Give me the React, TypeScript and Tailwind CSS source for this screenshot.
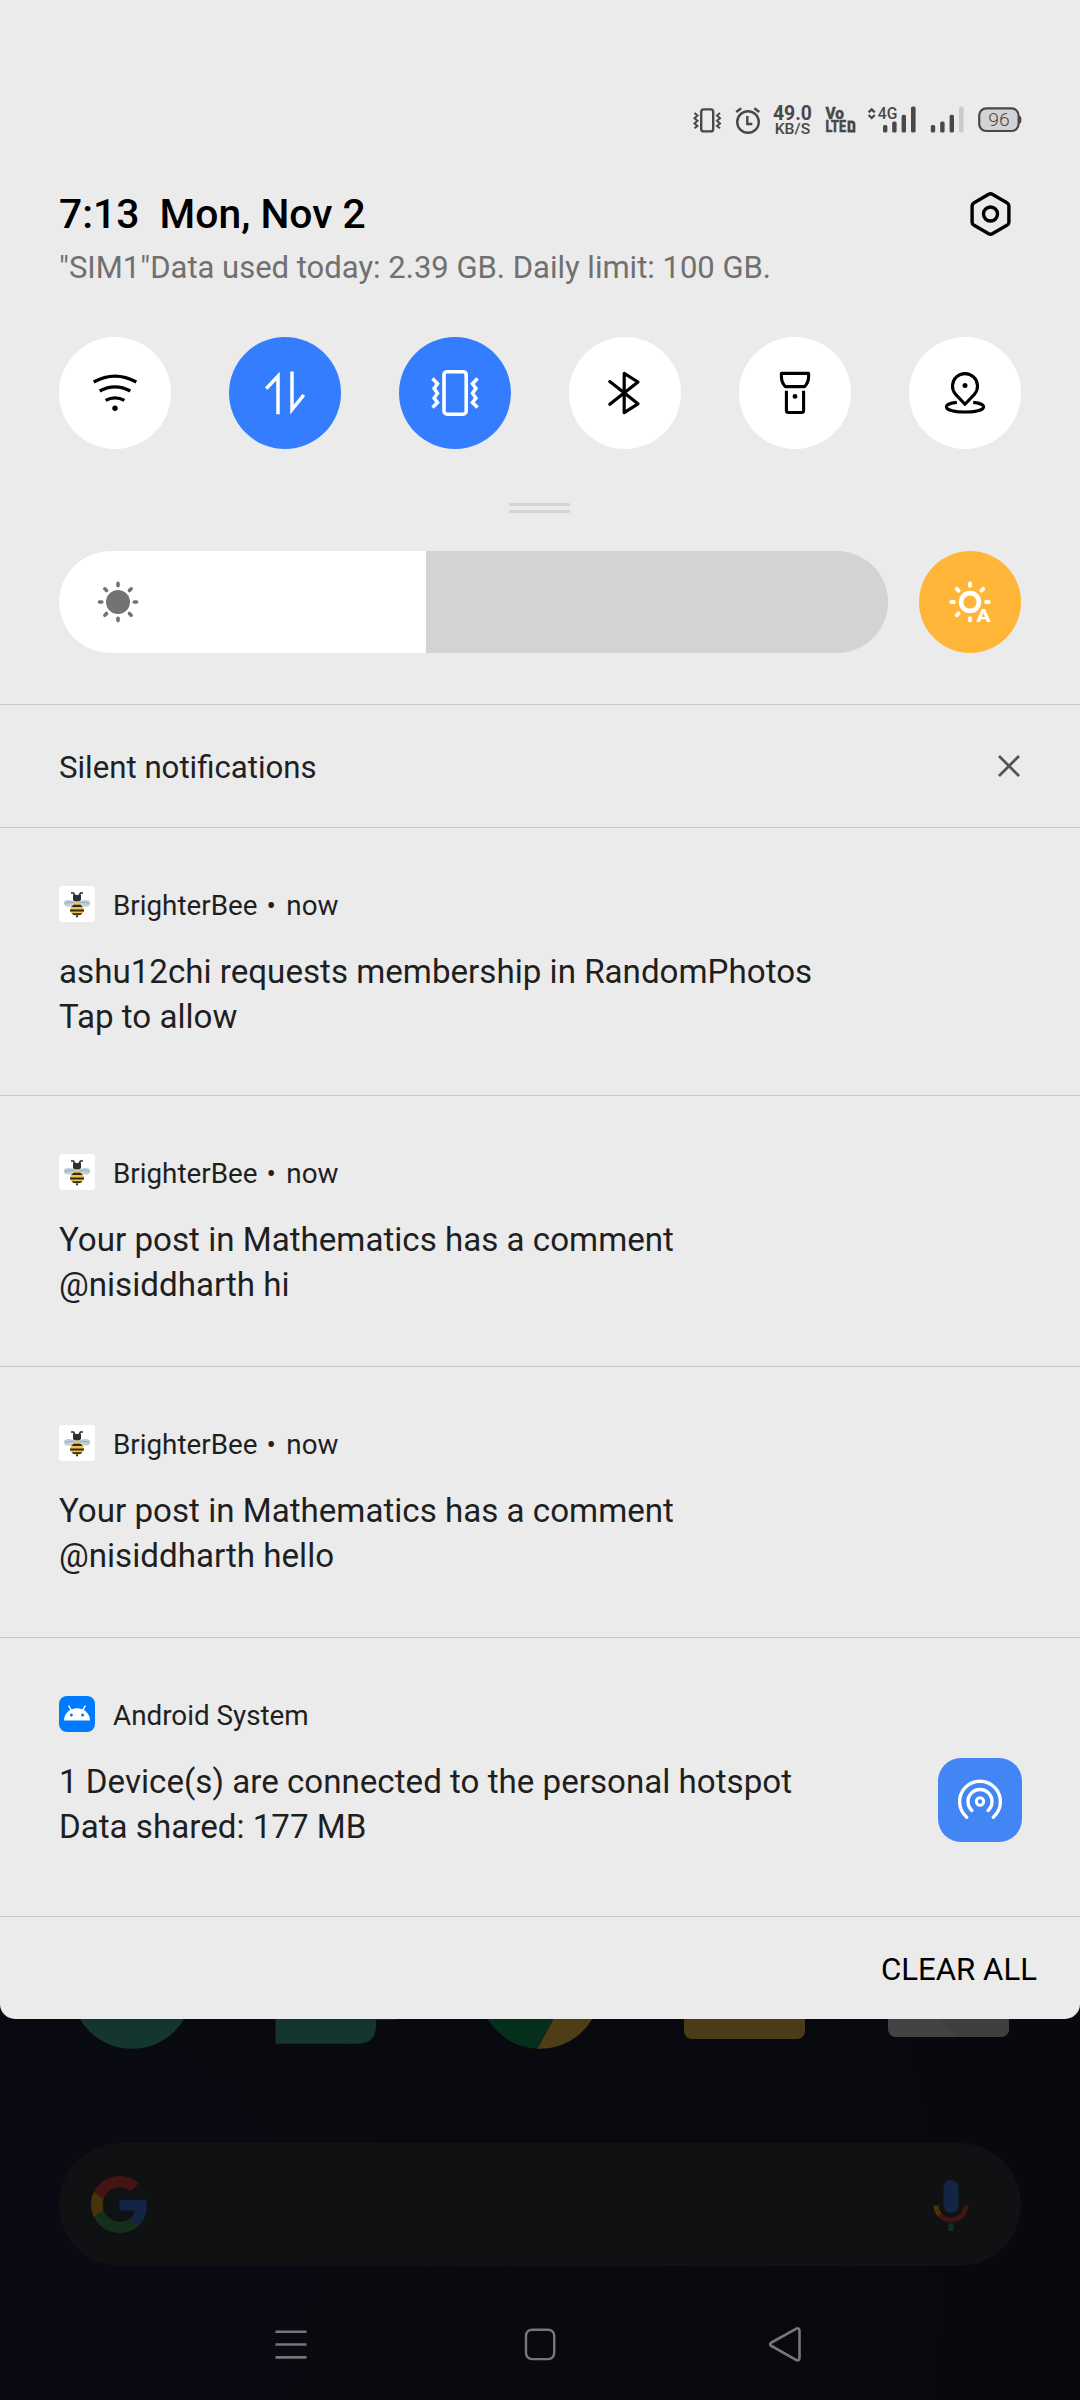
import type { ReactNode } from "react";

function StatusIcons() {
  return (
    <svg className="block h-[46px] w-[340px]" viewBox="690 97 340 46" fill="none" stroke="#484848" fontFamily="Roboto, sans-serif">
      <rect x="701.2" y="109.4" width="12" height="22" rx="2.5" strokeWidth="2.4" />
      <path d="M694.5 113l3 2.6-3 2.6 3 2.6-3 2.6 3 2.6-3 2.2M720 113l-3 2.6 3 2.6-3 2.6 3 2.6-3 2.6 3 2.2" strokeWidth="2" />
      <circle cx="748" cy="122" r="10.8" strokeWidth="2.4" />
      <path d="M747.3 116v8h5M736.2 112l5-3.8M759.3 112l-5-3.8" strokeWidth="2.4" />
      <g fill="#484848" stroke="none">
        <text x="773" y="120" fontSize="19.5" fontWeight="700" textLength="39" lengthAdjust="spacingAndGlyphs">49.0</text>
        <text x="774.7" y="133.8" fontSize="15" fontWeight="500" textLength="35.5" lengthAdjust="spacingAndGlyphs">KB/S</text>
        <text x="825.5" y="118.9" fontSize="16.5" fontWeight="800" stroke="#484848" strokeWidth=".4" textLength="18.5" lengthAdjust="spacingAndGlyphs">Vo</text>
        <text x="825.5" y="132.4" fontSize="16.8" fontWeight="800" stroke="#484848" strokeWidth=".5" textLength="20.5" lengthAdjust="spacingAndGlyphs">LTE</text>
        <text x="877.8" y="118.8" fontSize="17" fontWeight="500" textLength="19.5" lengthAdjust="spacingAndGlyphs">4G</text>
        <rect x="883" y="125" width="4.4" height="7.5" rx="1.6" />
        <rect x="892.2" y="121.6" width="4.4" height="10.9" rx="1.6" />
        <rect x="901.6" y="114.8" width="4.4" height="17.7" rx="1.6" />
        <rect x="911" y="106.5" width="4.6" height="26" rx="1.6" />
        <rect x="930.8" y="125" width="4.4" height="7.5" rx="1.6" />
        <rect x="940.2" y="121.6" width="4.4" height="10.9" rx="1.6" />
        <rect x="949.6" y="114.8" width="4.4" height="17.7" rx="1.6" />
        <rect x="959" y="106.5" width="4.6" height="26" rx="1.6" fill="#cbcbcb" />
        <path d="M1018 116h1.5a1.8 1.8 0 0 1 1.8 1.8v4a1.8 1.8 0 0 1-1.8 1.8H1018z" />
      </g>
      <path d="M849 121.8h2.6q2.4 0 2.4 2.4v6.9H849z" strokeWidth="2.8" />
      <path d="M868.6 112.4l3.1-3 3.1 3M868.6 115l3.1 3 3.1-3" strokeWidth="2.2" />
      <rect x="979.2" y="108.4" width="39.4" height="22.6" rx="7" fill="#d3d3d3" strokeWidth="2.2" />
      <text x="988.3" y="126.2" fontSize="19" fontWeight="300" fill="#484848" stroke="none" textLength="21.5" lengthAdjust="spacingAndGlyphs">96</text>
    </svg>
  );
}

function SettingsIcon() {
  return (
    <svg className="size-[46px]" viewBox="0 0 46 46" fill="none" stroke="#000" strokeWidth="3.4" strokeLinejoin="round">
      <path d="M21.7 3.3q1.8-1 3.6 0l14.6 8.4q2 1.1 2 3.1v16.4q0 2-2 3.1l-14.6 8.4q-1.8 1-3.6 0l-14.6-8.4q-2-1.100-2-3.100V14.800q0-2 2-3.100z" />
      <circle cx="23.5" cy="23" r="7" />
    </svg>
  );
}

/* Quick-setting glyphs share a 56-unit canvas centred in the round tile. */
function TileIcon({ children }: { children: ReactNode }) {
  return (
    <svg className="size-14" viewBox="-28 -28 56 56" fill="none" stroke="currentColor" strokeWidth="3">
      {children}
    </svg>
  );
}

const tiles: { name: string; on: boolean; icon: ReactNode }[] = [
  {
    name: "Wi-Fi",
    on: false,
    icon: (
      <>
        <path d="M-21.3-11Q0-22.6 21.3-11M-15.3-2Q0-10.2 15.3-2M-9.4 7.4Q0 2.2 9.4 7.4" strokeWidth="3.3" />
        <circle cy="15.3" r="2.7" fill="currentColor" stroke="none" />
      </>
    ),
  },
  {
    name: "Mobile data",
    on: true,
    icon: <path d="M-18.8-4.4L-7-16.8V21.3M7-21.5V16.6L18.8 2" strokeWidth="3.5" />,
  },
  {
    name: "Vibrate",
    on: true,
    icon: (
      <>
        <rect x="-11" y="-21.3" width="22.2" height="42.5" rx="3.2" strokeWidth="3.6" />
        <path d="M-22.5-14.5l5 5.2-3.4 4.8 3.4 4.8-3.4 4.8 3.4 4.4-5 5M22.5-14.5l-5 5.2 3.4 4.8-3.4 4.8 3.4 4.8-3.4 4.4 5 5" strokeWidth="3.5" />
      </>
    ),
  },
  {
    name: "Bluetooth",
    on: false,
    icon: <path d="M-15.2-11.4L13 10.8-.8 19.6v-39.2L13-11-15.2 11.2" strokeWidth="3.2" strokeLinecap="round" strokeLinejoin="round" />,
  },
  {
    name: "Flashlight",
    on: false,
    icon: (
      <>
        <path d="M-13.6-19.6h27.2v3q0 6-4 10.2H-9.6q-4-4.2-4-10.2zM-8.6-2.2V17.5q0 2 2 2H6.6q2 0 2-2V-2.2" strokeWidth="3.1" strokeLinejoin="round" />
        <circle cy="3.4" r="2.4" fill="currentColor" stroke="none" />
      </>
    ),
  },
  {
    name: "Location",
    on: false,
    icon: (
      <>
        <path d="M0 11.3L-9.6 1.1A12.5 12.5 0 1 1 9.6 1.1Z" strokeWidth="3.1" strokeLinejoin="round" />
        <circle cy="-7.6" r="2.5" fill="currentColor" stroke="none" />
        <path d="M-8.2 9.4C-14 10-18.6 11.6-18.6 13.8c0 7 37.2 7 37.2 0 0-2.2-4.6-3.8-10.4-4.4" strokeWidth="3.1" />
      </>
    ),
  },
];

const rayAngles = [0, 45, 90, 135, 180, 225, 270, 315];

function SunIcon() {
  return (
    <svg className="size-[42px]" viewBox="-21 -21 42 42" stroke="#737373" strokeWidth="3.6" strokeLinecap="round">
      <circle r="12" fill="#737373" stroke="none" />
      {rayAngles.map((a) => (
        <path key={a} d="M0-18.6V-16.2" transform={`rotate(${a})`} />
      ))}
    </svg>
  );
}

function AutoSunIcon() {
  return (
    <svg className="size-[52px]" viewBox="-26 -26 52 52" stroke="#fff" strokeWidth="4" strokeLinecap="round" fill="none">
      <circle r="8.9" strokeWidth="4.6" />
      {rayAngles
        .filter((a) => a !== 135)
        .map((a) => (
          <path key={a} d="M0-18.6V-16.2" transform={`rotate(${a})`} />
        ))}
      <text x="6.2" y="20.4" fontSize="18.5" fontWeight="800" fontFamily="Roboto, sans-serif" fill="#fff" stroke="none" textLength="14.5" lengthAdjust="spacingAndGlyphs">
        A
      </text>
    </svg>
  );
}

function BeeIcon() {
  return (
    <span className="flex size-9 rounded-[3px] bg-white">
      <svg className="size-9" viewBox="0 0 36 36">
        <path d="M16.5 10.5l-2-3.500h-2.500M19.500 10.500l2-3.500H24" fill="none" stroke="#2b3137" strokeWidth="1.600" />
        <path d="M14 9h8v4.500l-1 2h-6l-1-2z" fill="#2b3137" />
        <path d="M17 16c-3-2.400-9-2.800-12-.6-.8 4.600 3 6 6.500 4.800C14 19.400 16 18 17 16zM19 16c3-2.400 9-2.800 12-.6.8 4.600-3 6-6.500 4.800C22 19.400 20 18 19 16z" fill="#c0ced5" />
        <path d="M6 17.600c3-1.500 7-1.600 10-.6M30 17.600c-3-1.500-7-1.600-10-.6" stroke="#93a6af" strokeWidth=".9" fill="none" />
        <path d="M18 15.500l5 4.500q3 2.500 1 6.500-2 3-6 3.500-4-.5-6-3.500-2-4 1-6.500z" fill="#efc04d" />
        <path d="M14.500 18.700h7l2.400 2.400H12.100zM11 23.500h14v2H11zM12.500 27.200h11l-2 1.900h-7zM17 29.500h2v1.700h-2z" fill="#33291a" />
      </svg>
    </span>
  );
}

function AndroidIcon() {
  return (
    <span className="flex size-9 rounded-[8px] bg-[#007bff]">
      <svg className="size-9" viewBox="0 0 36 36">
        <path d="M5 24.500a13 12.300 0 0 1 26 0z" fill="#fff" />
        <path d="M12.600 14.800L9.600 9.600M23.400 14.800l3-5.200" stroke="#fff" strokeWidth="1.500" />
        <circle cx="12.400" cy="19" r="1.500" fill="#007bff" />
        <circle cx="23.600" cy="19" r="1.500" fill="#007bff" />
      </svg>
    </span>
  );
}

function HotspotIcon() {
  return (
    <span className="-mt-px flex size-[84px] rounded-[23px] bg-[#4285f4]">
      <svg className="size-[84px]" viewBox="0 0 84 84" fill="none" stroke="#fff" strokeWidth="3.400" strokeLinecap="round">
        <circle cx="42" cy="43.500" r="3.700" strokeWidth="3" />
        <path d="M33.900 52.400a12 12 0 1 1 16.200 0" />
        <path d="M28.800 59.200a20.400 20.400 0 1 1 26.400 0" />
      </svg>
    </span>
  );
}

type NotificationProps = { app: string; time?: string; icon: ReactNode; title: string; text: string; action?: ReactNode; size: string };

function Notification({ app, time, icon, title, text, action, size }: NotificationProps) {
  return (
    <article className={`flex flex-col border-b border-[#c5c7c7] pt-[58px] pr-[58px] pl-[59px] text-[#1f1f1f] ${size}`}>
      <header className="flex h-9 items-center gap-[18px]">
        {icon}
        <div className="flex gap-[9px] pt-[3px] text-[27.8px] leading-9">
          <span>{app}</span>
          {time && <span>•</span>}
          {time && <span className="ml-[1.5px]">{time}</span>}
        </div>
      </header>
      <div className="mt-[27px] flex justify-between">
        <div className="text-[33.15px] leading-[45px] whitespace-nowrap">
          <h2>{title}</h2>
          <p>{text}</p>
        </div>
        {action}
      </div>
    </article>
  );
}

function GoogleLogo() {
  return (
    <svg className="h-[57px] w-[57px]" viewBox="0 0 48 48">
      <path fill="#431412" d="M24 9.5c3.54 0 6.71 1.22 9.21 3.6l6.85-6.85C35.9 2.38 30.47 0 24 0 14.62 0 6.51 5.38 2.56 13.22l7.98 6.19C12.43 13.72 17.74 9.5 24 9.5z" />
      <path fill="#132444" d="M46.98 24.55c0-1.57-.15-3.09-.38-4.55H24v9.02h12.94c-.58 2.96-2.26 5.48-4.78 7.18l7.73 6c4.51-4.18 7.09-10.36 7.09-17.65z" />
      <path fill="#463509" d="M10.53 28.59c-.48-1.45-.76-2.99-.76-4.59s.27-3.14.76-4.59l-7.98-6.19C.92 16.46 0 20.12 0 24c0 3.88.92 7.54 2.56 10.78l7.97-6.19z" />
      <path fill="#162f1a" d="M24 48c6.48 0 11.93-2.13 15.89-5.81l-7.73-6c-2.15 1.45-4.92 2.3-8.16 2.3-6.26 0-11.57-4.22-13.47-9.91l-7.98 6.19C6.51 42.62 14.62 48 24 48z" />
    </svg>
  );
}

function MicIcon() {
  return (
    <svg className="h-[54px] w-[38px]" viewBox="0 0 38 54" fill="none" strokeWidth="5">
      <rect x="11.5" y="2" width="15" height="33" rx="7.5" fill="#132444" />
      <path d="M4 27.5a15 15 0 0 0 4 9.8" stroke="#463509" />
      <path d="M8 37.3A15 15 0 0 0 34 27.5" stroke="#431412" />
      <path d="M19 45.3v7.7" stroke="#15301c" />
    </svg>
  );
}

function DockIcons() {
  return (
    <div className="flex h-[30px] w-full items-start pl-[72px]">
      <svg className="h-[30px] w-[120px]" viewBox="0 0 120 30">
        <circle cx="60" cy="-30.5" r="60.3" fill="#15362f" />
      </svg>
      <svg className="ml-[83px] h-[30px] w-[123px]" viewBox="0 0 123 30">
        <path d="M.5 0h100.500v7q0 17.700-19 17.700H.5z" fill="#15362f" />
        <path d="M101 0h21v1h-21z" fill="#122c28" />
      </svg>
      <svg className="ml-[82px] h-[30px] w-[120px]" viewBox="0 0 120 30">
        <path d="M7.700 0a60.300 60.300 0 0 0 49.800 29.700L73.500 0z" fill="#052f1a" />
        <path d="M73.500 0L57.500 29.700A60.300 60.300 0 0 0 112.300 0z" fill="#4e3e17" />
      </svg>
      <div className="ml-[83.5px] h-5 w-[121px] rounded-b-[8px] bg-[#4a3c17]" />
      <div className="ml-[83px] h-[18px] w-[121px] overflow-hidden rounded-b-[8px] bg-[#434343]">
        <svg className="h-[18px] w-[121px]" viewBox="0 0 121 18">
          <path d="M51 0l18 18h52V0z" fill="#3f3f3f" />
        </svg>
      </div>
    </div>
  );
}

export default function App() {
  return (
    <main className="flex h-[2400px] w-[1080px] flex-col overflow-hidden bg-[#08090e] bg-[radial-gradient(circle_at_4%_95%,#0a0a14_0,#090a0f_420px,#08090e_900px)] font-['Roboto',sans-serif]">
      <section className="flex h-[2019px] shrink-0 flex-col rounded-b-[15px] bg-[#ebebeb]">
        <div className="flex justify-end pt-[97px] pr-[50px]">
          <StatusIcons />
        </div>

        <header className="mt-[47px] flex justify-between pr-[67px] pl-[59px]">
          <div>
            <h1 className="text-[40.8px] leading-[48px] font-medium whitespace-pre text-black">7:13  Mon, Nov 2</h1>
            <p className="mt-[12px] text-[31px] leading-9 whitespace-nowrap text-[#707070]">
              "SIM1"Data used today: 2.39 GB. Daily limit: 100 GB.
            </p>
          </div>
          <div className="pt-px">
            <SettingsIcon />
          </div>
        </header>

        <div className="mt-[51px] flex gap-[58px] pl-[59px]">
          {tiles.map((t) => (
            <button
              key={t.name}
              aria-label={t.name}
              className={`flex size-28 items-center justify-center rounded-full ${t.on ? "bg-[#347dff] text-white" : "bg-white text-black"}`}
            >
              <TileIcon>{t.icon}</TileIcon>
            </button>
          ))}
        </div>

        <div className="mt-[54px] mr-px flex flex-col items-center gap-[4px]">
          <div className="h-[3px] w-[61px] rounded-full bg-[#d3d3d3]" />
          <div className="h-[3px] w-[61px] rounded-full bg-[#d3d3d3]" />
        </div>

        <div className="mt-[38px] flex gap-[31px] pl-[59px]">
          <div className="flex h-[102px] w-[829px] overflow-hidden rounded-full bg-[#d3d3d3]">
            <div className="flex w-[367px] items-center bg-white pl-[38px]">
              <SunIcon />
            </div>
          </div>
          <button aria-label="Automatic brightness" className="flex size-[102px] items-center justify-center rounded-full bg-[#ffb638]">
            <AutoSunIcon />
          </button>
        </div>

        <div className="mt-[51px] flex h-[124px] items-center justify-between border-y border-[#c9c9c9] pr-[59px] pl-[59px]">
          <h2 className="pt-[4px] text-[31.2px] leading-9 text-[#202124]">Silent notifications</h2>
          <svg className="size-6" viewBox="0 0 24 24" stroke="#555" strokeWidth="2.8" fill="none">
            <path d="M2 2l20 20M22 2L2 22" />
          </svg>
        </div>

        <Notification size="h-[268px]" icon={<BeeIcon />} app="BrighterBee" time="now" title="ashu12chi requests membership in RandomPhotos" text="Tap to allow" />
        <Notification size="h-[271px]" icon={<BeeIcon />} app="BrighterBee" time="now" title="Your post in Mathematics has a comment" text="@nisiddharth hi" />
        <Notification size="h-[271px]" icon={<BeeIcon />} app="BrighterBee" time="now" title="Your post in Mathematics has a comment" text="@nisiddharth hello" />
        <Notification
          size="h-[279px]"
          icon={<AndroidIcon />}
          app="Android System"
          title="1 Device(s) are connected to the personal hotspot"
          text="Data shared: 177 MB"
          action={<HotspotIcon />}
        />

        <div className="flex flex-1 items-center justify-end pr-[43px]">
          <button className="pt-[3px] text-[31.2px] leading-9 text-black">CLEAR ALL</button>
        </div>
      </section>

      <DockIcons />

      <div className="mx-[59px] mt-[94px] flex h-[123px] items-center justify-between rounded-full bg-[#101113] pr-[51px] pl-[32px]">
        <GoogleLogo />
        <MicIcon />
      </div>

      <nav className="mt-[58px] flex h-10 items-center pl-[275px] text-[#77777a]">
        <svg className="h-10 w-8" viewBox="0 0 32 40" stroke="currentColor" strokeWidth="2.6">
          <path d="M.5 7.7h31M.5 20.5h31M.5 33.4h31" />
        </svg>
        <svg className="ml-[217px] h-10 w-8" viewBox="0 0 32 40" fill="none" stroke="currentColor" strokeWidth="2.4">
          <rect x="2" y="5.7" width="28.2" height="29.4" rx="6" />
        </svg>
        <svg className="ml-[213px] h-10 w-9" viewBox="0 0 36 40" fill="none" stroke="currentColor" strokeWidth="2.6" strokeLinejoin="round">
          <path d="M2.500 18.500L27 4.800q3.500-1.500 3.500 2v27q0 3.500-3.500 2L2.500 22q-3-1.750 0-3.500z" />
        </svg>
      </nav>
    </main>
  );
}
